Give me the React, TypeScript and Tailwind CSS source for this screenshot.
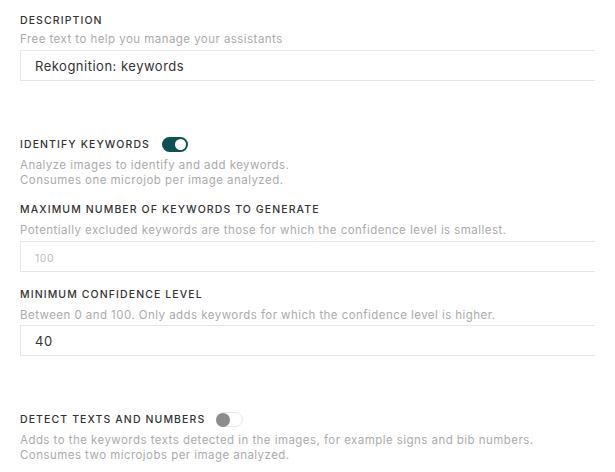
import React from 'react';

const font = { fontFamily: 'Inter, "Open Sans", sans-serif' };

function Label({ children }: { children: React.ReactNode }) {
  return <p className="text-[10.5px] font-medium tracking-[1.1px] uppercase text-[#333] leading-[14px]">{children}</p>;
}

function Help({ children }: { children: React.ReactNode }) {
  return <p className="text-[11.5px] tracking-[0.45px] text-[#ababab] leading-[15px]">{children}</p>;
}

function Field({ value, placeholder }: { value?: string; placeholder?: string }) {
  return (
    <div className="w-[575px] overflow-hidden mt-[3px]">
      <input
        readOnly
        value={value ?? ''}
        placeholder={placeholder}
        className="w-[620px] h-[31px] border border-[#e6e6e6] bg-white px-[14px] text-[13px] tracking-[0.5px] text-[#333] outline-none placeholder:text-[#bdbdbd] placeholder:text-[10.5px]"
        style={font}
      />
    </div>
  );
}

function Toggle({ on }: { on: boolean }) {
  return on ? (
    <span className="inline-flex items-center justify-end w-[26px] h-[15px] rounded-full bg-[#0e5155] px-[2px]">
      <span className="w-[11px] h-[11px] rounded-full bg-white" />
    </span>
  ) : (
    <span className="inline-flex items-center w-[27px] h-[15px] rounded-full bg-white border border-[#e8e8e8]">
      <span className="w-[14px] h-[14px] -ml-px rounded-full bg-[#8c8c8c]" />
    </span>
  );
}

export default function App() {
  return (
    <div className="w-[615px] h-[472px] bg-white overflow-hidden pl-5 pt-[14px]" style={font}>
      <Label>Description</Label>
      <div className="mt-[4px]"><Help>Free text to help you manage your assistants</Help></div>
      <Field value="Rekognition: keywords" />

      <div className="flex items-center gap-[12px] mt-[56px]">
        <Label>Identify keywords</Label>
        <Toggle on />
      </div>
      <div className="mt-[6px]">
        <Help>Analyze images to identify and add keywords.</Help>
        <Help>Consumes one microjob per image analyzed.</Help>
      </div>

      <div className="mt-[15px]"><Label>Maximum number of keywords to generate</Label></div>
      <div className="mt-[6px]"><Help>Potentially excluded keywords are those for which the confidence level is smallest.</Help></div>
      <Field placeholder="100" />

      <div className="mt-[16px]"><Label>Minimum confidence level</Label></div>
      <div className="mt-[6px]"><Help>Between 0 and 100. Only adds keywords for which the confidence level is higher.</Help></div>
      <div className="-mt-[1px]"><Field value="40" /></div>

      <div className="flex items-center gap-[11px] mt-[56px]">
        <Label>Detect texts and numbers</Label>
        <Toggle on={false} />
      </div>
      <div className="mt-[6px]">
        <Help>Adds to the keywords texts detected in the images, for example signs and bib numbers.</Help>
        <Help>Consumes two microjobs per image analyzed.</Help>
      </div>
    </div>
  );
}
